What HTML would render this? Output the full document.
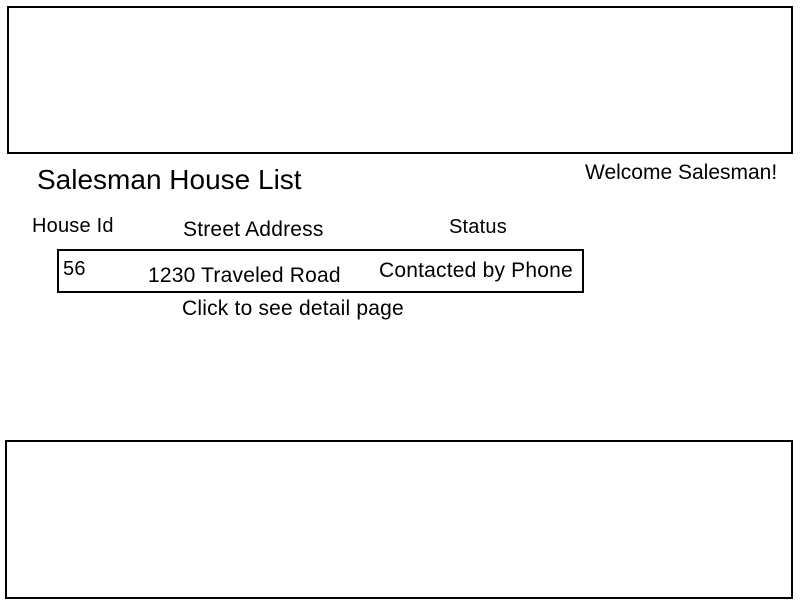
<!DOCTYPE html>
<html><head><meta charset="utf-8"><style>
html,body{margin:0;padding:0;width:800px;height:600px;background:#fff;overflow:hidden;font-family:"Liberation Sans",sans-serif;color:#000}
.b{position:absolute;border:2px solid #000;box-sizing:border-box}
.t{position:absolute;white-space:nowrap;line-height:1;font-size:21px;letter-spacing:0.2px}
</style></head><body>
<div class="b" style="left:7px;top:6px;width:786px;height:148px"></div>
<div class="b" style="left:5px;top:440px;width:788px;height:159px"></div>
<div class="b" style="left:57px;top:249px;width:527px;height:44px"></div>
<div class="t" style="left:37px;top:166px;font-size:28px;letter-spacing:0">Salesman House List</div>
<div class="t" style="left:585px;top:162px;font-size:21px;letter-spacing:0">Welcome Salesman!</div>
<div class="t" style="left:32px;top:216px;font-size:20px">House Id</div>
<div class="t" style="left:183px;top:219px">Street Address</div>
<div class="t" style="left:449px;top:217px;font-size:20px">Status</div>
<div class="t" style="left:63px;top:259px;font-size:20px">56</div>
<div class="t" style="left:148px;top:265px">1230 Traveled Road</div>
<div class="t" style="left:379px;top:260px">Contacted by Phone</div>
<div class="t" style="left:182px;top:298px">Click to see detail page</div>
</body></html>
